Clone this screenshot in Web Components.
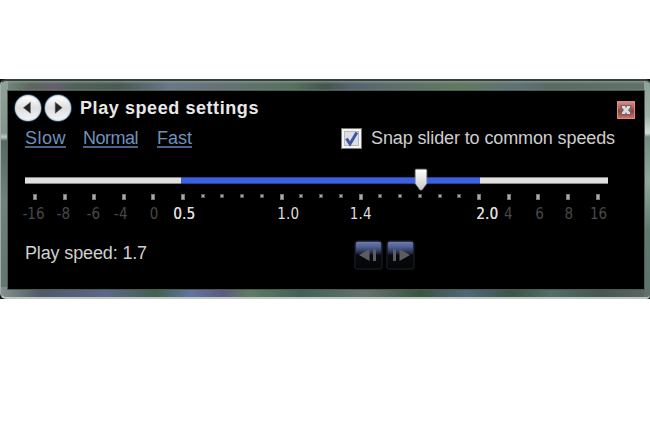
<!DOCTYPE html>
<html lang="en"><head><meta charset="utf-8"><title>Play speed settings</title>
<style>html,body{margin:0;background:#fff}body{width:650px;height:433px;overflow:hidden;font-family:"Liberation Sans",Arial,sans-serif}</style></head>
<body><speed-window></speed-window>
<script>
class UiElement extends HTMLElement{
  connectedCallback(){
    if(!this.shadowRoot){this.attachShadow({mode:'open'}).innerHTML=this.view();this.ready();}
  }
  a(n){return this.getAttribute(n)}
  ready(){}
}
// Text spaced to a given measure
customElements.define('fit-text',class extends UiElement{
  view(){return `<style>:host{display:block;white-space:nowrap;line-height:20px}span{display:inline-block}</style><span><slot></slot></span>`}
  ready(){
    const s=this.shadowRoot.querySelector('span'),n=this.textContent.length,w=+this.a('measure');
    s.style.letterSpacing=(w-s.getBoundingClientRect().width)/n+'px';
    this.style.width=w+'px';
  }
});
customElements.define('nav-button',class extends UiElement{
  view(){const p=this.a('dir')==='back'?'M16.4 8.2V19.2L9.4 13.7Z':'M11.2 8.2V19.2L18.2 13.7Z';
  return `<style>:host{display:block;width:28px;height:28px}svg{display:block}</style>
  <svg width="28" height="28"><defs><linearGradient id="g" x2="0" y2="1"><stop stop-color="#fff"/><stop offset=".5" stop-color="#dedede"/><stop offset="1" stop-color="#f4f4f4"/></linearGradient></defs>
  <circle cx="14" cy="14" r="13.8" fill="#375870"/><circle cx="14" cy="14" r="13" fill="#cfe0ea"/><circle cx="14" cy="14" r="11.8" fill="url(#g)"/><path d="${p}" fill="#222" stroke="#666" stroke-width=".6"/></svg>`}
});
customElements.define('close-button',class extends UiElement{
  view(){return `<style>:host{display:block;width:18px;height:18px}svg{display:block}</style>
  <svg width="18" height="18"><defs><linearGradient id="g" x2="0" y2="1"><stop stop-color="#d99082"/><stop offset=".45" stop-color="#b7513f"/><stop offset=".55" stop-color="#a5382a"/><stop offset="1" stop-color="#cf7565"/></linearGradient></defs>
  <rect x=".5" y=".5" width="17" height="17" fill="url(#g)" stroke="#d68f82"/><rect x="3.5" y="4" width="11" height="10.5" fill="#686478" opacity=".85"/><path d="M5 5H8L9 7.2 10 5H13V6.6L11 9 13 11.6V13H10L9 10.9 8 13H5V11.6L7 9 5 6.6Z" fill="#ddd"/></svg>`}
});
customElements.define('check-box',class extends UiElement{
  view(){return `<style>:host{display:flex;align-items:center;gap:9px;color:#cecece}svg{display:block}</style>
  <svg width="21" height="21"><rect x=".5" y=".5" width="20" height="20" fill="#f4f4f4" stroke="#777"/><rect x="3.5" y="3.5" width="14" height="14" fill="#dcdee5" stroke="#b5b8c0"/><path d="M5.5 10.5L9 16L15.8 4.5" fill="none" stroke="#4054a0" stroke-width="3"/></svg><slot></slot>`}
});
customElements.define('speed-link',class extends UiElement{
  view(){return `<style>:host{display:block;height:20px;color:#7090ba}div{height:18px;border-bottom:2px solid #486388}</style><div><slot></slot></div>`}
});
customElements.define('speed-track',class extends UiElement{
  view(){return `<style>:host{display:grid;width:583px;height:24px;align-items:center}
  div{grid-area:1/1;height:7px;background:linear-gradient(90deg,transparent 156px,#2442a0 156px 455.5px,transparent 455.5px) 0 0/100% 1px no-repeat,linear-gradient(90deg,transparent 156px,#2442a0 156px 455.5px,transparent 455.5px) 0 6px/100% 1px no-repeat,linear-gradient(90deg,transparent 156px,#3c63df 156px 455.5px,transparent 455.5px),linear-gradient(#888 0 1px,#e0e0e0 1px 6px,#888 6px)}
  svg{grid-area:1/1;margin-left:389px;z-index:1}</style><div></div>
  <svg width="14" height="24"><defs><linearGradient id="g" x2="0" y2="1"><stop stop-color="#fff"/><stop offset="1" stop-color="#c8c8c8"/></linearGradient></defs><path d="M2.5 1.2H11.5Q12.8 1.2 12.8 2.5V15.5L8 22H6L1.2 15.5V2.5Q1.2 1.2 2.5 1.2Z" fill="url(#g)" stroke="#888" stroke-width=".8"/></svg>`}
});
customElements.define('speed-scale',class extends UiElement{
  view(){
    const L={0:['-16',-1.5,22],1:['-8',-1.2,14],2:['-6',-.8,14],3:['-4',-3,14],4:['0',.8,9],5:['0.5',1.3,22],10:['1.0',6.5,22],14:['1.4',0,22],20:['2.0',8,22],21:['4',-.3,9],22:['6',1.3,9],23:['8',.9,9],24:['16',.8,17]};
    let h='';
    for(let i=0;i<25;i++){
      const l=L[i],gap=i===24?0:(i<5||i>=20)?29.6:19.75;
      h+=`<div class="cell" style="margin-right:${gap}px"><i class="${l?'major':'minor'}"></i>${l?`<fit-text measure="${l[2]}" class="${i>4&&i<21?'on':''} ${i===5||i===20?'bold':''}" style="transform:translateX(${l[1]}px)">${l[0]}</fit-text>`:''}</div>`;
    }
    return `<style>:host{display:flex;font:15px "DejaVu Sans Condensed","DejaVu Sans",sans-serif;font-stretch:condensed;color:#484848}
    .cell{width:0;flex:none;display:flex;flex-direction:column;align-items:center}i{display:block;flex:none;width:4px;background:#aaa;box-sizing:border-box;border:1px solid #555}.major{height:6px;margin-bottom:4px;border-color:#777}.minor{height:4px}.on{color:#ddd}.bold{text-shadow:.3px 0 #ddd}</style>${h}`}
});
customElements.define('step-button',class extends UiElement{
  view(){const b=this.a('dir')==='back';return `<style>:host{display:block;width:29px;height:30px}svg{display:block}</style>
  <svg width="29" height="30"><defs><linearGradient id="g" x2="0" y2="1"><stop stop-color="#7182b4"/><stop offset=".22" stop-color="#4d5d91"/><stop offset=".43" stop-color="#222a46"/><stop offset=".5" stop-color="#090a10"/><stop offset="1" stop-color="#050505"/></linearGradient></defs>
  <rect x="1" y="1" width="27" height="28" rx="3" fill="url(#g)" stroke="#15171e" stroke-width="1.5"/><g fill="#5c5d60">${b?'<path d="M15.5 9V21L5 15Z"/><rect x="19" y="9" width="3" height="12"/>':'<rect x="7" y="9" width="3" height="12"/><path d="M13.5 9V21L24 15Z"/>'}</g></svg>`}
});
customElements.define('speed-window',class extends UiElement{
  view(){return `<style>
  :host{display:block;padding-top:79px}
  .frame{box-sizing:border-box;width:650px;height:220px;background:#111;overflow:hidden}
  .glass{box-sizing:border-box;height:220px;padding:10px 6px 9px 7px;border:1px solid #a5adaa;border-top:2px solid #34403c;border-right:0;border-bottom:2px solid #bfc7c4;border-radius:6px 5px 4px 6px;
  background:linear-gradient(#8fa198,#82958d 52px,#bdc9c4 56px,#566961 60px,#6f827c 120px,transparent 190px) 0 0/7px 100% no-repeat,linear-gradient(#8fa198,#9eb0a5 35px,#d3ddd6 52px,#718c80 56px,#91a799 100px,#627970 150px,#5d7169) 100% 0/6px 100% no-repeat,linear-gradient(#8a9a92cc,transparent 3px,transparent 8px,#8a9a9299 10px) 0 0/100% 11px no-repeat,linear-gradient(90deg,#7b8b80,#59675d 30px,#665f6c 54px,#4e6158 75px,#4a5a54 120px,#697789 170px,#667178 215px,#56715f 290px,#44564f 325px,#56626e 350px,#5d6b6c 385px,#607960 460px,#5f6f76 520px,#596a62 550px,#63716b) 0 0/100% 11px no-repeat,linear-gradient(90deg,#84918f,#4d5a68 40px,#5d688a 105px,#43604e 155px,#6374a0 190px,#5c5a7e 222px,#5f7c65 248px,#426058 300px,#63726c 365px,#39533f 420px,#51677b 465px,#3b5548 510px,#526c68 550px,#465650 600px,#606765) 0 100%/100% 10px no-repeat,#647770}
  main{box-sizing:border-box;height:198px;background:#000;outline:1px solid #4b5953;padding:3px 9px 0 6px;display:flex;flex-direction:column}
  header{display:flex;height:28px;align-items:center;gap:2px}h1{margin:-1px 0 0 6px;font-size:18px;color:#e8e8e8}close-button{margin:3px 0 0 auto}
  .options{display:flex;height:22px;margin:5px 20px 0 11px;align-items:center;font-size:18px}.slow{margin-right:17px}.fast{margin-left:19px}check-box{margin-left:auto}
  speed-track{margin:19px 0 0 11px}speed-scale{margin:2px 0 0 21px}
  footer{display:flex;margin:16px 0 0 11px;font-size:18px;color:#d0d0d0}.speed{margin-top:3px}.steps{display:flex;gap:3px;margin-left:207px}
  </style><div class="frame"><div class="glass"><main>
  <header><nav-button dir="back"></nav-button><nav-button></nav-button><h1><fit-text measure="179">Play speed settings</fit-text></h1><close-button></close-button></header>
  <div class="options"><speed-link class="slow"><fit-text measure="41">Slow</fit-text></speed-link><speed-link><fit-text measure="55">Normal</fit-text></speed-link><speed-link class="fast"><fit-text measure="35">Fast</fit-text></speed-link><check-box><fit-text measure="244">Snap slider to common speeds</fit-text></check-box></div>
  <speed-track></speed-track><speed-scale></speed-scale>
  <footer><fit-text class="speed" measure="122">Play speed: 1.7</fit-text><div class="steps"><step-button dir="back"></step-button><step-button></step-button></div></footer>
  </main></div></div>`}
});
</script></body></html>
